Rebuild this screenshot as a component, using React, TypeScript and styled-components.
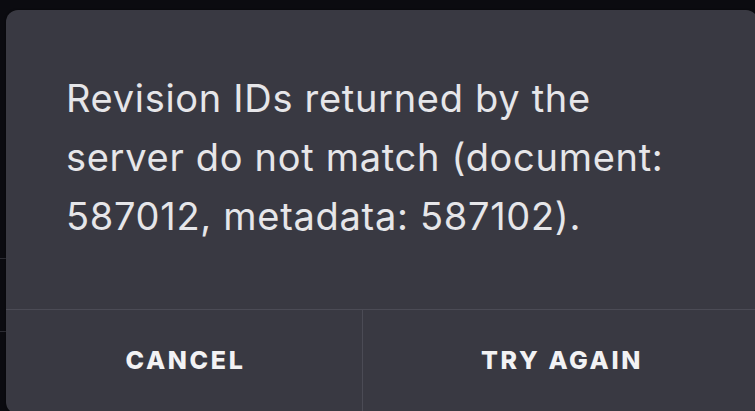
import React from "react";
import styled, { createGlobalStyle } from "styled-components";

const Global = createGlobalStyle`
  html, body {
    margin: 0;
    padding: 0;
    background: #0b0b10;
    overflow: hidden;
  }
  body {
    font-family: Inter, "Noto Sans", sans-serif;
  }
`;

const Page = styled.div`
  position: relative;
  width: 755px;
  height: 411px;
  overflow: hidden;
  background: #0b0b10;
`;

const Backdrop = styled.div`
  position: absolute;
  left: 0;
  top: 0;
  width: 6px;
  height: 411px;
`;

const BackLine = styled.div<{ $top: number }>`
  position: absolute;
  left: 0;
  width: 6px;
  top: ${(p) => p.$top}px;
  height: 1px;
  background: #2c2c33;
`;

const Dialog = styled.div`
  position: absolute;
  left: 6px;
  top: 10px;
  width: 752px;
  height: 404px;
  background: #393942;
  border-radius: 12px;
  display: flex;
  flex-direction: column;
  box-shadow: 0 0 2px rgba(0, 0, 0, 0.5);
`;

const Message = styled.p`
  margin: 0;
  padding: 59px 72px 63px 60px;
  font-size: 38px;
  line-height: 59px;
  letter-spacing: 0.7px;
  color: #e6e6e9;
  font-weight: 400;
`;

const Actions = styled.div`
  display: grid;
  grid-template-columns: 356px 1fr;
  border-top: 1px solid #4b4b55;
  flex: 1;
`;

const ActionButton = styled.button<{ $divider?: boolean }>`
  appearance: none;
  border: none;
  background: transparent;
  margin: 0;
  padding: 0 0 4px 3px;
  font-family: Inter, "Noto Sans", sans-serif;
  font-size: 25px;
  font-weight: 800;
  letter-spacing: 2.6px;
  color: #f2f2f4;
  text-transform: uppercase;
  border-left: ${(p) => (p.$divider ? "1px solid #4b4b55" : "none")};
  cursor: pointer;
`;

export default function App() {
  return (
    <Page>
      <Global />
      <Backdrop>
        <BackLine $top={258} />
        <BackLine $top={331} />
      </Backdrop>
      <Dialog>
        <Message>
          Revision IDs returned by the server do not match (document: 587012,
          metadata: 587102).
        </Message>
        <Actions>
          <ActionButton>Cancel</ActionButton>
          <ActionButton $divider>Try again</ActionButton>
        </Actions>
      </Dialog>
    </Page>
  );
}
